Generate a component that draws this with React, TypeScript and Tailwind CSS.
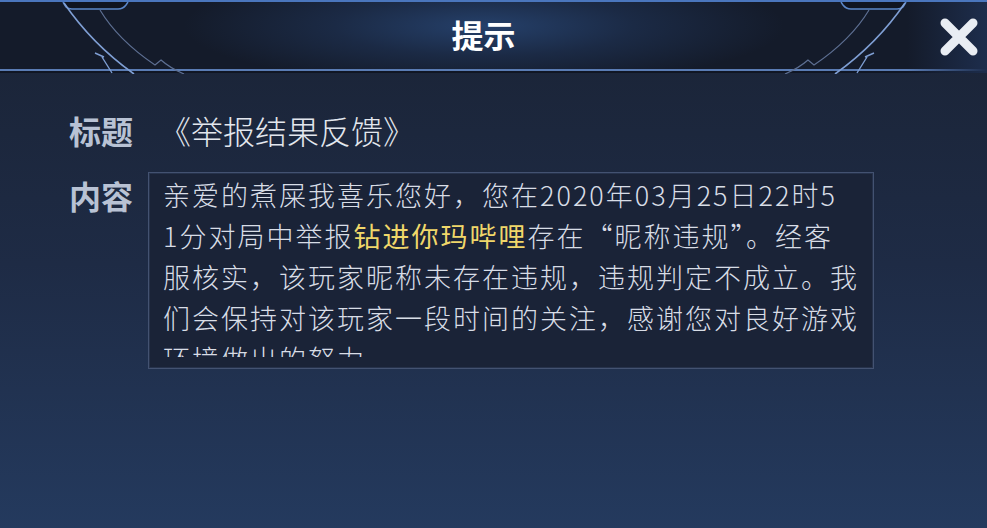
import React from 'react';

const lines: React.ReactNode[] = [
  '亲爱的煮屎我喜乐您好，您在2020年03月25日22时5',
  <>1分对局中举报<span className="font-normal text-[#f0d76a]">钻进你玛哔哩</span>存在“昵称违规”。经客</>,
  '服核实，该玩家昵称未存在违规，违规判定不成立。我',
  '们会保持对该玩家一段时间的关注，感谢您对良好游戏',
  '环境做出的努力',
];

function Deco({ className }: { className?: string }) {
  return (
    <svg className={className} width="160" height="72" viewBox="40 0 160 72" fill="none">
      <path d="M63 0 L66 5 Q68 7 72 7 L118 7 Q123 7 126 3 L128 0" fill="#0f1420" stroke="#5a86c8" strokeWidth="1.5" />
      <path d="M64 1 Q92 42 134 72" stroke="#7f9fd4" strokeWidth="1.6" />
      <path d="M100 8 Q118 38 155 63 L161 58 Q170 66 184 72" stroke="#5d6f92" strokeWidth="1.2" />
      <path d="M95 51 L104 55 M102 55 L112 71" stroke="#7f9fd4" strokeWidth="1.4" />
    </svg>
  );
}

export default function App() {
  return (
    <div
      className="relative w-[987px] h-[528px] overflow-hidden bg-gradient-to-b from-[#1a2335] via-[#1e2b45] to-[#243a5e]"
      style={{ fontFamily: '"Noto Sans CJK SC", "Noto Sans", sans-serif' }}
    >
      {/* header */}
      <div className="relative h-[73px] border-t-2 border-[#4a76bd] bg-[radial-gradient(ellipse_300px_60px_at_484px_24px,#25406a_0%,#1b2a45_50%,#141b2a_100%)]">
        <div className="absolute inset-x-0 bottom-0 h-[4px] bg-[#101624] border-t-2 border-[#5a7cb4]" />
        <Deco className="absolute left-[40px] top-0" />
        <Deco className="absolute left-[769px] top-0 -scale-x-100" />
        <div className="absolute right-0 top-0 h-full w-[80px] bg-gradient-to-l from-[#1d2d4c] to-transparent" />
        <div className="flex h-[64px] items-center justify-center pr-[20px]">
          <span className="text-[32px] font-bold text-white leading-none">提示</span>
        </div>
        <svg className="absolute left-[940px] top-[16px]" width="38" height="38" viewBox="0 0 38 38">
          <path d="M5 5 L33 33 M33 5 L5 33" stroke="#e9edf3" strokeWidth="9" strokeLinecap="round" />
        </svg>
      </div>

      {/* body */}
      <div className="pl-[69px] pt-[37px]">
        <div className="flex h-[40px] items-center">
          <span className="w-[90px] text-[32px] font-bold leading-none text-[#b8c2d4]">标题</span>
          <span className="text-[32px] font-light leading-none text-[#e3e7ee]">《举报结果反馈》</span>
        </div>
        <div className="mt-[22px] flex items-start">
          <span className="mt-[7px] w-[79px] text-[32px] font-bold leading-none text-[#b8c2d4]">内容</span>
          <div className="w-[726px] h-[197px] border border-[#435271] bg-[#1a2337] pl-[14px] pt-[1px] shadow-[inset_0_0_0_1px_#26324b]">
            <div className="h-[183px] overflow-hidden text-[27px] font-light leading-[41px] tracking-[2px] text-[#d8dde6] whitespace-nowrap">
              {lines.map((l, i) => (
                <div key={i}>{l}</div>
              ))}
            </div>
          </div>
        </div>
      </div>
    </div>
  );
}
